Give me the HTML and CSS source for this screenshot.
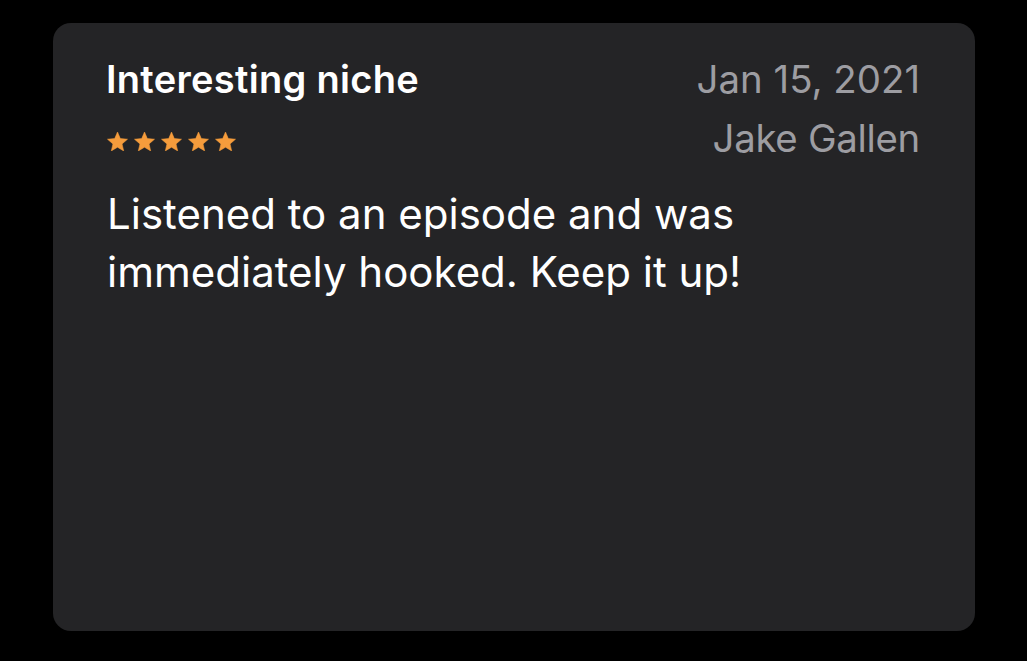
FILE: index.html
```html
<!DOCTYPE html>
<html lang="en">
<head>
<meta charset="utf-8">
<title>Review</title>
<link rel="stylesheet" href="styles.css">
</head>
<body>
<main class="card">
  <header class="card-head">
    <div class="head-left">
      <h1 class="title">Interesting niche</h1>
      <div class="stars" aria-label="5 stars">
        <svg class="star" viewBox="0 0 22 20" preserveAspectRatio="none"><path d="M11 0L13.94 6.95 21.46 7.6 15.76 12.55 17.47 19.9 11 16 4.53 19.9 6.24 12.55 0.54 7.6 8.06 6.95Z"/></svg>
        <svg class="star" viewBox="0 0 22 20" preserveAspectRatio="none"><path d="M11 0L13.94 6.95 21.46 7.6 15.76 12.55 17.47 19.9 11 16 4.53 19.9 6.24 12.55 0.54 7.6 8.06 6.95Z"/></svg>
        <svg class="star" viewBox="0 0 22 20" preserveAspectRatio="none"><path d="M11 0L13.94 6.95 21.46 7.6 15.76 12.55 17.47 19.9 11 16 4.53 19.9 6.24 12.55 0.54 7.6 8.06 6.95Z"/></svg>
        <svg class="star" viewBox="0 0 22 20" preserveAspectRatio="none"><path d="M11 0L13.94 6.95 21.46 7.6 15.76 12.55 17.47 19.9 11 16 4.53 19.9 6.24 12.55 0.54 7.6 8.06 6.95Z"/></svg>
        <svg class="star" viewBox="0 0 22 20" preserveAspectRatio="none"><path d="M11 0L13.94 6.95 21.46 7.6 15.76 12.55 17.47 19.9 11 16 4.53 19.9 6.24 12.55 0.54 7.6 8.06 6.95Z"/></svg>
      </div>
    </div>
    <div class="head-right">
      <div class="date">Jan 15, 2021</div>
      <div class="author">Jake Gallen</div>
    </div>
  </header>
  <p class="body">Listened to an episode and was immediately hooked. Keep it up!</p>
</main>
</body>
</html>
```
FILE: styles.css
```css
html, body {
  margin: 0;
  padding: 0;
  background: #000;
}
body {
  font-family: Inter, "Noto Sans", "Liberation Sans", sans-serif;
  padding: 23px 52px 30px 53px;
  box-sizing: border-box;
  height: 661px;
}
.card {
  box-sizing: border-box;
  width: 922px;
  height: 608px;
  background: #242426;
  border-radius: 18px;
  padding: 36px 55px 0 53px;
}
.card-head {
  display: flex;
  justify-content: space-between;
  align-items: flex-start;
}
.title {
  margin: 0;
  font-size: 38px;
  line-height: 40px;
  font-weight: 600;
  color: #fff;
  letter-spacing: 0.3px;
}
.stars {
  display: flex;
  gap: 6px;
  margin-top: 33px;
  height: 19px;
  padding-left: 1px;
}
.star {
  flex: none;
  width: 21px;
  height: 19px;
  fill: #f59c3c;
  stroke: #f59c3c;
  stroke-width: 0.6;
  stroke-linejoin: round;
}
.head-right {
  text-align: right;
  color: #9d9da2;
  font-size: 38.4px;
  line-height: 40px;
}
.author {
  margin-top: 19px;
  letter-spacing: -0.3px;
}
.body {
  margin: 27px 0 0 1px;
  font-size: 42px;
  line-height: 58px;
  color: #fff;
  max-width: 680px;
}
```
